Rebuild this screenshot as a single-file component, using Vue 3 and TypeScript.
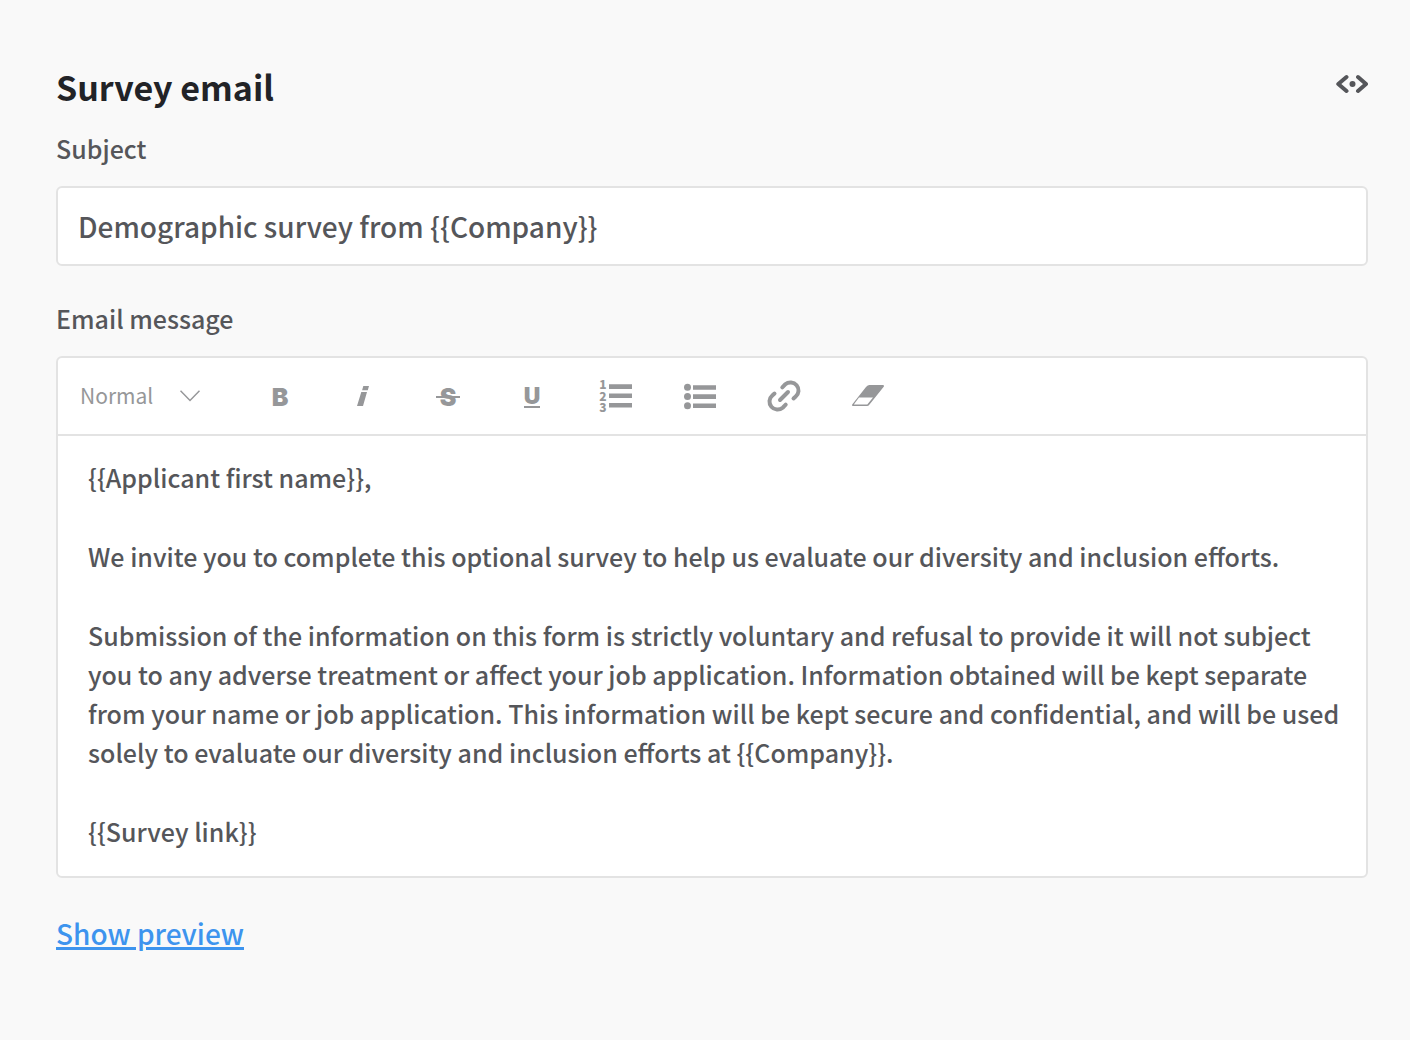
<script setup lang="ts">
import { ref } from 'vue'

const subject = ref('Demographic survey from {{Company}}')
const format = ref('Normal')
const formats: string[] = ['Normal', 'Heading 1', 'Heading 2']

const paragraphs: string[] = [
  '{{Applicant first name}},',
  'We invite you to complete this optional survey to help us evaluate our diversity and inclusion efforts.',
  'Submission of the information on this form is strictly voluntary and refusal to provide it will not subject you to any adverse treatment or affect your job application. Information obtained will be kept separate from your name or job application. This information will be kept secure and confidential, and will be used solely to evaluate our diversity and inclusion efforts at {{Company}}.',
  '{{Survey link}}',
]
</script>

<template>
  <main class="survey">
    <header class="heading">
      <h1>Survey email</h1>
      <button class="code" type="button" aria-label="Insert token">
        <svg width="32" height="20" viewBox="0 0 32 20" fill="none">
          <path d="M10.500 3 2.300 10 10.500 17M22 3 30 10l-8 7" stroke="currentColor" stroke-width="4" stroke-linecap="round" stroke-linejoin="round" />
          <circle cx="16.500" cy="10" r="3" fill="currentColor" />
        </svg>
      </button>
    </header>

    <label class="label" for="subject">Subject</label>
    <input id="subject" v-model="subject" class="subject" type="text" />

    <span id="message-label" class="label message-label">Email message</span>
    <section class="editor">
      <div class="toolbar" role="toolbar" aria-label="Formatting">
        <div class="format">
          <select v-model="format" aria-label="Text format">
            <option v-for="f in formats" :key="f">{{ f }}</option>
          </select>
          <svg class="chevron" width="20" height="12" viewBox="0 0 20 12" fill="none">
            <path d="M.5.8 10 10.500 19.500.8" stroke="currentColor" stroke-width="1.500" />
          </svg>
        </div>
        <button type="button" aria-label="Bold">
          <svg viewBox="0 0 40 40"><text class="letter" x="20" y="29">B</text></svg>
        </button>
        <button type="button" aria-label="Italic">
          <svg viewBox="0 0 40 40"><path d="M19.300 9H25l-1.200 4.200h-5.700zM17.300 15H23l-4 14h-6z" /></svg>
        </button>
        <button type="button" aria-label="Strikethrough">
          <svg viewBox="0 0 40 40"><text class="letter" x="20" y="29">S</text><path d="M8 19h24v2H8z" /></svg>
        </button>
        <button type="button" aria-label="Underline">
          <svg viewBox="0 0 40 40"><text class="letter small" x="20" y="27">U</text><path d="M12 29h16v2H12z" /></svg>
        </button>
        <button type="button" aria-label="Numbered list">
          <svg viewBox="0 0 40 40">
            <text class="digit" x="7" y="12">1</text>
            <text class="digit" x="7" y="24">2</text>
            <text class="digit" x="7" y="35">3</text>
            <path d="M13 7.300h23v4.600H13zM13 16.500h23v4.600H13zM13 26h23v4.600H13z" />
          </svg>
        </button>
        <button type="button" aria-label="Bulleted list">
          <svg viewBox="0 0 40 40">
            <circle cx="7.500" cy="10.300" r="3.500" />
            <circle cx="7.500" cy="19.500" r="3.500" />
            <circle cx="7.500" cy="28.700" r="3.500" />
            <path d="M13 8.200h23v4.600H13zM13 17.300h23v4.600H13zM13 26.500h23v4.600H13z" />
          </svg>
        </button>
        <button type="button" aria-label="Link">
          <svg viewBox="0 0 40 40">
            <path class="line" d="m16 23 8-8M18.300 10.300l3-3a8 8 0 0 1 10.400 12.200L29.500 21.500M21.700 27.700l-3 3A8 8 0 0 1 8.300 18.500L10.500 16.500" />
          </svg>
        </button>
        <button type="button" aria-label="Clear formatting">
          <svg viewBox="0 0 40 40">
            <path fill-rule="evenodd" d="M21.500 8H34.500q2.500 0 1 2L21.500 27.500Q20.400 29 19 29H5q-1.800 0-.6-1.700L18 10Q19.700 8 21.500 8zM11 20.500 5.800 27.600H19.300L25 20.500z" />
          </svg>
        </button>
      </div>
      <div class="body" contenteditable="true" role="textbox" aria-multiline="true" aria-labelledby="message-label">
        <p v-for="(text, i) in paragraphs" :key="i">{{ text }}</p>
      </div>
    </section>

    <a class="preview" href="#preview">Show preview</a>
  </main>
</template>

<style>
body {
  margin: 0;
  background: #f9f9f9;
}
</style>

<style scoped>
.survey {
  display: flex;
  flex-direction: column;
  align-items: stretch;
  padding: 64px 42px 64px 56px;
  color: #55565a;
  font-family: "Noto Sans CJK SC", "Open Sans", sans-serif;
  font-weight: 500;
}

.heading {
  display: flex;
  justify-content: space-between;
  align-items: flex-start;
}

h1 {
  margin: 0;
  color: #222327;
  font-size: 34px;
  font-weight: 700;
  line-height: 46px;
}

button {
  padding: 0;
  border: 0;
  background: none;
  cursor: pointer;
}

.code {
  display: flex;
  padding-top: 10px;
  color: #55565a;
}

.label {
  margin: 21px 0;
  font-size: 25px;
  line-height: 34px;
}

.message-label {
  margin-top: 35px;
}

.subject {
  box-sizing: border-box;
  width: 100%;
  height: 80px;
  padding: 0 20px;
  border: 2px solid #e3e3e3;
  border-radius: 6px;
  background: #fff;
  color: inherit;
  font-family: inherit;
  font-size: 28px;
  font-weight: inherit;
}

.editor {
  border: 2px solid #e3e3e3;
  border-radius: 6px;
  background: #fff;
}

.toolbar {
  display: flex;
  align-items: center;
  box-sizing: border-box;
  height: 78px;
  padding-top: 2px;
  border-bottom: 2px solid #e3e3e3;
  color: #969799;
}

.format {
  position: relative;
  width: 180px;
}

.format select {
  display: block;
  width: 144px;
  margin: 0;
  padding: 0 0 4px 22px;
  border: 0;
  appearance: none;
  background: none;
  color: inherit;
  font-family: inherit;
  font-size: 21px;
  font-weight: 400;
  line-height: 36px;
}

.chevron {
  position: absolute;
  top: 13px;
  left: 122px;
  pointer-events: none;
}

.toolbar button {
  display: flex;
  justify-content: center;
  width: 84px;
  color: inherit;
}

.toolbar button svg {
  width: 40px;
  height: 40px;
  overflow: visible;
  fill: currentColor;
}

.letter {
  font-family: Inter, sans-serif;
  font-size: 25px;
  font-weight: 900;
  text-anchor: middle;
}

.small {
  font-size: 23px;
}

.digit {
  font-family: "Noto Sans CJK SC", sans-serif;
  font-size: 12px;
  font-weight: 900;
  text-anchor: middle;
}

.line {
  fill: none;
  stroke: currentColor;
  stroke-width: 4;
  stroke-linecap: round;
}

.body {
  display: flex;
  flex-direction: column;
  gap: 40px;
  padding: 22px 20px 25px 30px;
  outline: none;
  font-size: 25px;
  line-height: 39px;
}

.body p {
  margin: 0;
}

.preview {
  align-self: flex-start;
  margin-top: 35px;
  color: #3d94ee;
  font-size: 28px;
  line-height: 40px;
  text-decoration-thickness: 3px;
}
</style>
